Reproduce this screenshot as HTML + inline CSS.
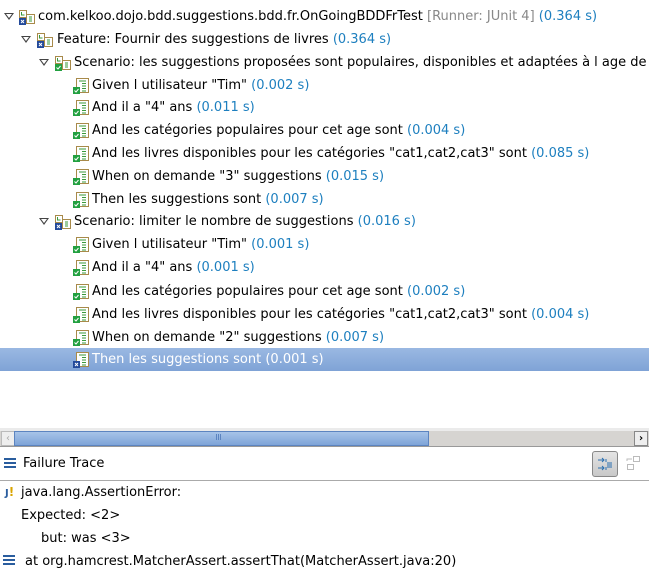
<!DOCTYPE html>
<html><head><meta charset="utf-8"><style>
html,body{margin:0;width:649px;height:574px;overflow:hidden}
body{background:#fff;font-family:"DejaVu Sans","Liberation Sans",sans-serif;font-size:13px;color:#000;position:relative}
.r{position:absolute;left:0;width:649px;height:23px;line-height:23px;white-space:nowrap;overflow:hidden}
.t{color:#1d7fbf}
.tri{position:absolute;top:8px;width:0;height:0;border-left:5px solid transparent;border-right:5px solid transparent;border-top:7px solid #444}
.tri:after{content:"";position:absolute;left:-3px;top:-6px;border-left:3px solid transparent;border-right:3px solid transparent;border-top:4px solid #fff}
svg{position:absolute;top:4px}
.sel{background:linear-gradient(#9ab8e2,#7fa3d6);color:#fff}
.sel .t{color:#fff}
</style></head><body>
<svg width="0" height="0" style="position:absolute"><defs>
<g id="doc"><rect x="3.5" y="0.5" width="12" height="14" fill="#fff" stroke="#a88a4a"/><path d="M6 3h7M9 5.5h4M9 8h4M9 10.5h4M9 13h4" stroke="#3a9a3a"/></g>
<g id="ok"><rect x="0" y="9" width="7" height="7" fill="#22a040"/><path d="M1.5 12.5l1.5 1.5 2.5-3" stroke="#fff" fill="none"/></g>
<g id="bad"><rect x="0" y="9" width="7" height="7" fill="#234a9a"/><path d="M2 11l3 3M5 11l-3 3" stroke="#fff"/></g>
<g id="suite"><rect x="0.5" y="1.5" width="7" height="7" fill="#fff" stroke="#a88a4a"/><rect x="7.5" y="5.5" width="8" height="9" fill="#fff" stroke="#a88a4a"/><path d="M10 8h3M10 10h3M10 12h3M2.5 3v3h3" stroke="#3a9a3a" fill="none"/></g>
</defs></svg>

<div class="r" style="top:5px"><span class="tri" style="left:4px"></span><svg style="left:19px" width="16" height="16"><use href="#suite"/><use href="#bad"/></svg><span style="position:absolute;left:38px">com.kelkoo.dojo.bdd.suggestions.bdd.fr.OnGoingBDDFrTest <span style="color:#888">[Runner: JUnit 4]</span> <span class="t">(0.364 s)</span></span></div>
<div class="r" style="top:28px"><span class="tri" style="left:21px"></span><svg style="left:37px" width="16" height="16"><use href="#suite"/><use href="#bad"/></svg><span style="position:absolute;left:57px">Feature: Fournir des suggestions de livres <span class="t">(0.364 s)</span></span></div>
<div class="r" style="top:51px"><span class="tri" style="left:39px"></span><svg style="left:55px" width="16" height="16"><use href="#suite"/><use href="#ok"/></svg><span style="position:absolute;left:74px">Scenario: les suggestions proposées sont populaires, disponibles et adaptées à l age de l'utilisateur</span></div>
<div class="r" style="top:74px"><svg style="left:73px" width="16" height="16"><use href="#doc"/><use href="#ok"/></svg><span style="position:absolute;left:92px">Given l utilisateur "Tim" <span class="t">(0.002 s)</span></span></div>
<div class="r" style="top:96px"><svg style="left:73px" width="16" height="16"><use href="#doc"/><use href="#ok"/></svg><span style="position:absolute;left:92px">And il a "4" ans <span class="t">(0.011 s)</span></span></div>
<div class="r" style="top:119px"><svg style="left:73px" width="16" height="16"><use href="#doc"/><use href="#ok"/></svg><span style="position:absolute;left:92px">And les catégories populaires pour cet age sont <span class="t">(0.004 s)</span></span></div>
<div class="r" style="top:142px"><svg style="left:73px" width="16" height="16"><use href="#doc"/><use href="#ok"/></svg><span style="position:absolute;left:92px">And les livres disponibles pour les catégories "cat1,cat2,cat3" sont <span class="t">(0.085 s)</span></span></div>
<div class="r" style="top:165px"><svg style="left:73px" width="16" height="16"><use href="#doc"/><use href="#ok"/></svg><span style="position:absolute;left:92px">When on demande "3" suggestions <span class="t">(0.015 s)</span></span></div>
<div class="r" style="top:188px"><svg style="left:73px" width="16" height="16"><use href="#doc"/><use href="#ok"/></svg><span style="position:absolute;left:92px">Then les suggestions sont <span class="t">(0.007 s)</span></span></div>
<div class="r" style="top:210px"><span class="tri" style="left:39px"></span><svg style="left:55px" width="16" height="16"><use href="#suite"/><use href="#bad"/></svg><span style="position:absolute;left:74px">Scenario: limiter le nombre de suggestions <span class="t">(0.016 s)</span></span></div>
<div class="r" style="top:233px"><svg style="left:73px" width="16" height="16"><use href="#doc"/><use href="#ok"/></svg><span style="position:absolute;left:92px">Given l utilisateur "Tim" <span class="t">(0.001 s)</span></span></div>
<div class="r" style="top:256px"><svg style="left:73px" width="16" height="16"><use href="#doc"/><use href="#ok"/></svg><span style="position:absolute;left:92px">And il a "4" ans <span class="t">(0.001 s)</span></span></div>
<div class="r" style="top:280px"><svg style="left:73px" width="16" height="16"><use href="#doc"/><use href="#ok"/></svg><span style="position:absolute;left:92px">And les catégories populaires pour cet age sont <span class="t">(0.002 s)</span></span></div>
<div class="r" style="top:303px"><svg style="left:73px" width="16" height="16"><use href="#doc"/><use href="#ok"/></svg><span style="position:absolute;left:92px">And les livres disponibles pour les catégories "cat1,cat2,cat3" sont <span class="t">(0.004 s)</span></span></div>
<div class="r" style="top:326px"><svg style="left:73px" width="16" height="16"><use href="#doc"/><use href="#ok"/></svg><span style="position:absolute;left:92px">When on demande "2" suggestions <span class="t">(0.007 s)</span></span></div>
<div class="r sel" style="top:348px"><svg style="left:73px" width="16" height="16"><use href="#doc"/><use href="#bad"/></svg><span style="position:absolute;left:92px">Then les suggestions sont <span class="t">(0.001 s)</span></span></div>

<div style="position:absolute;left:0;top:428px;width:649px;height:3px;background:#ebebeb"></div>
<div style="position:absolute;left:0;top:431px;width:649px;height:15px;background:#d6d4d1;border-bottom:1px solid #999"></div>
<div style="position:absolute;left:1px;top:431px;width:12px;height:13px;background:#eee;border:1px solid #bbb;color:#aaa;font-size:10px;line-height:13px;text-align:center">&lsaquo;</div>
<div style="position:absolute;left:14px;top:431px;width:413px;height:13px;background:linear-gradient(#a7c3e8,#7ea4d8);border:1px solid #5c84c0"></div>
<div style="position:absolute;left:216px;top:434px;width:1px;height:6px;background:#5c84c0;box-shadow:2px 0 #5c84c0,4px 0 #5c84c0"></div>
<div style="position:absolute;left:634px;top:431px;width:12px;height:13px;background:#eee;border:1px solid #888;font-size:10px;line-height:13px;text-align:center;font-weight:bold">&rsaquo;</div>

<div style="position:absolute;left:4px;top:458px;width:12px;height:2px;background:#2a5d9e;box-shadow:0 4px #2a5d9e,0 8px #2a5d9e"></div>
<div style="position:absolute;left:23px;top:452px;line-height:23px">Failure Trace</div>
<div style="position:absolute;left:592px;top:451px;width:24px;height:24px;border:1px solid #888;border-radius:3px;background:linear-gradient(#e4e4e4,#c8c8c8)">
<svg style="left:4px;top:4px" width="16" height="16"><path d="M1 4h6M5 2l2 2-2 2M1 12h6M5 10l2 2-2 2M9 3v3M9 11v3" stroke="#2a6fb0" fill="none"/><path d="M10 7h5M10 9h5M10 11h5" stroke="#2a6fb0"/></svg></div>
<svg style="left:625px;top:455px" width="16" height="16"><rect x="8.5" y="1.5" width="6" height="5" fill="none" stroke="#bbb"/><rect x="2.5" y="9.5" width="6" height="5" fill="none" stroke="#bbb"/><path d="M2 6V4h5" stroke="#bbb" fill="none"/></svg>
<div style="position:absolute;left:0;top:480px;width:649px;height:1px;background:#aaa"></div>

<div style="position:absolute;left:5px;top:485px;color:#2a5d9e;font-size:10px;font-weight:bold">J<span style="color:#d9a400;font-size:12px">!</span></div>
<div style="position:absolute;left:21px;top:481px;line-height:23px">java.lang.AssertionError:</div>
<div style="position:absolute;left:21px;top:504px;line-height:23px">Expected: &lt;2&gt;</div>
<div style="position:absolute;left:41px;top:527px;line-height:23px">but: was &lt;3&gt;</div>
<div style="position:absolute;left:3px;top:555px;width:12px;height:2px;background:#2a5d9e;box-shadow:0 4px #2a5d9e,0 8px #2a5d9e"></div>
<div style="position:absolute;left:25px;top:550px;line-height:23px;white-space:nowrap">at org.hamcrest.MatcherAssert.assertThat(MatcherAssert.java:20)</div>
</body></html>
